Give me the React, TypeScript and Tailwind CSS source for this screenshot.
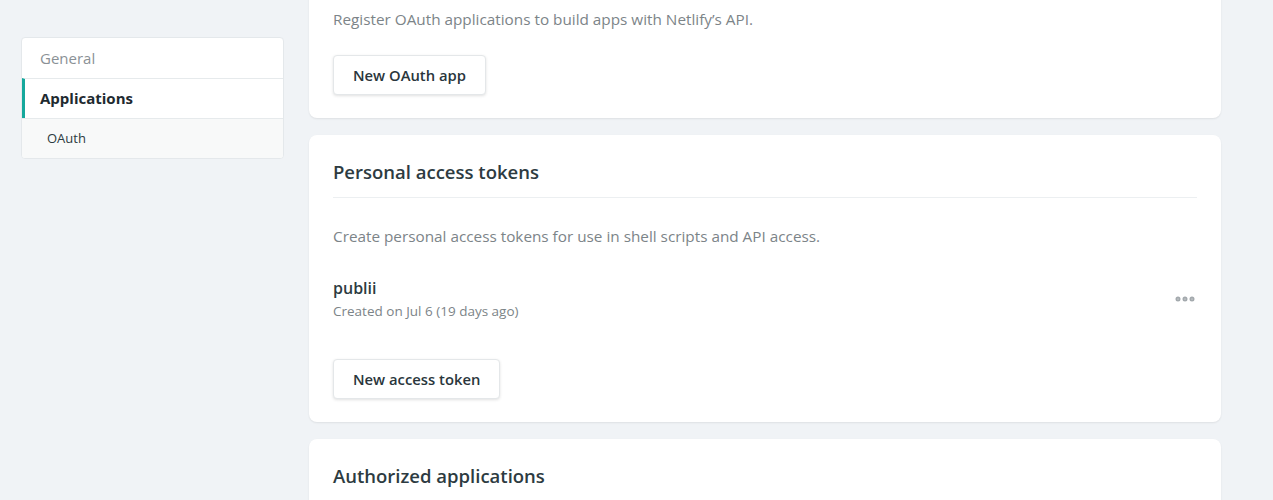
import { MoreHorizontal } from 'lucide-react';

const navItems = [
  { label: 'General', active: false, sub: false },
  { label: 'Applications', active: true, sub: false },
  { label: 'OAuth', active: false, sub: true },
];

function Button({ children }: { children: React.ReactNode }) {
  return (
    <button className="h-10 px-[19px] bg-white rounded-[4px] border border-[#e4e7e9] shadow-[0_1px_3px_rgba(0,0,0,0.12)] text-[14.8px] font-semibold text-[#2a363c]">
      {children}
    </button>
  );
}

function Card({ title, children }: { title?: string; children?: React.ReactNode }) {
  return (
    <section className="bg-white rounded-[8px] shadow-[0_1px_2px_rgba(0,0,0,0.08)] px-6 pt-6 pb-[23px]">
      {title && (
        <h2 className="text-[18.5px] leading-[26px] font-semibold text-[#2d3b41] pb-3 border-b border-[#eceff1]">{title}</h2>
      )}
      {children}
    </section>
  );
}

export default function App() {
  return (
    <div className="h-[500px] overflow-hidden bg-[#f0f3f6] font-['Open_Sans',sans-serif]">
      <div className="flex items-start pl-[21px] gap-[25px]">
        <nav className="mt-[37px] w-[263px] bg-white rounded-[4px] border border-[#e4e8eb] overflow-hidden">
          {navItems.map((item, i) => (
            <div
              key={item.label}
              className={[
                'h-10 flex items-center',
                i > 0 ? 'border-t border-[#e6eaec]' : '',
                item.active ? 'border-l-[3px] border-l-[#15a89c] pl-[15px] font-bold text-[#1e2a30] text-[15px]' : 'pl-[18px]',
                item.sub ? 'bg-[#f8f9f9] pl-[25px] text-[13px] text-[#2d3b41] font-medium' : '',
                !item.active && !item.sub ? 'text-[#8a9196] text-[15px] font-medium' : '',
              ].join(' ')}
            >
              {item.label}
            </div>
          ))}
        </nav>

        <main className="mt-[-17px] w-[912px] flex flex-col gap-[17px]">
          <Card>
            <p className="text-[15.3px] leading-6 text-[#7c8488]">
              Register OAuth applications to build apps with Netlify’s API.
            </p>
            <div className="mt-6">
              <Button>New OAuth app</Button>
            </div>
          </Card>

          <Card title="Personal access tokens">
            <p className="mt-[26px] text-[15.3px] leading-6 text-[#7c8488]">
              Create personal access tokens for use in shell scripts and API access.
            </p>
            <div className="mt-[29px] flex items-center justify-between">
              <div>
                <div className="text-[16px] leading-[22px] font-semibold text-[#2d3b41]">publii</div>
                <div className="mt-[3px] text-[13.5px] leading-[18px] text-[#7c8488]">Created on Jul 6 (19 days ago)</div>
              </div>
              <MoreHorizontal className="w-6 h-6 text-[#a3a9ad]" strokeWidth={3} />
            </div>
            <div className="mt-[39px]">
              <Button>New access token</Button>
            </div>
          </Card>

          <Card title="Authorized applications">
            <div className="h-10" />
          </Card>
        </main>
      </div>
    </div>
  );
}
